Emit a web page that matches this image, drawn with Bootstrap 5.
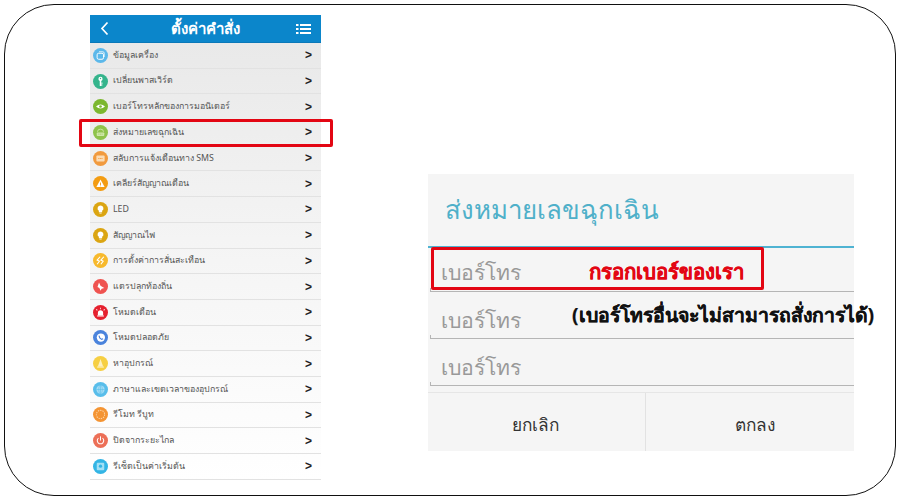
<!DOCTYPE html>
<html lang="th">

<head>
  <meta charset="UTF-8">
  <meta name="viewport" content="width=device-width, initial-scale=1.0">
  <title>ตั้งค่าคำสั่ง</title>
  <link href="https://cdn.jsdelivr.net/npm/bootstrap@5.3.0/dist/css/bootstrap.min.css" rel="stylesheet">
  <style>
    html, body { background: #fff; }
    body { margin: 0; width: 900px; height: 500px; overflow: hidden; font-family: "Noto Sans", "Liberation Sans", sans-serif; }
    .slide-frame { position: relative; width: 892px; height: 492px; margin: 4px 0 0 4px; border: 1px solid #111; border-radius: 50px; }
    .slide-body { padding: 10px 0 0 85px; gap: 107px; }

    .phone-panel { width: 231px; flex: none; }
    .phone-head { height: 28px; background: #0b86cb; color: #fff; border-bottom: 1px solid #0a78b8; padding: 0 10px; }
    .phone-head h1 { font-size: 15px; font-weight: 700; line-height: 1; margin: 0; letter-spacing: .1px; }
    .phone-list { background: linear-gradient(#e9e9e9, #f4f4f4 45%, #fff 100%); }
    .phone-row { height: 25.7px; padding: 0 9px 0 3px; border-bottom: 1px solid #e2e2e2; font-size: 8.8px; color: #555; }
    .phone-row svg { flex: none; margin-right: 5px; }
    .phone-row b { margin-left: auto; font-family: "Liberation Sans", sans-serif; font-size: 12px; color: #222; line-height: 1; }

    .alert-box { width: 426px; height: 277px; margin-top: 159px; background: #f5f5f5; flex: none; }
    .alert-title { height: 74px; padding: 0 17px 2px; border-bottom: 2px solid #4fb3d2; font-size: 25.8px; color: #4fb0c9; }
    .alert-field { position: relative; height: 47px; margin-left: 2px; padding: 14px 8px 0 11px; border-bottom: 1px solid #b5b5b5; font-size: 21.2px; color: #999; line-height: 1.3; }
    .alert-field::before { content: ""; position: absolute; left: 0; bottom: 0; height: 3px; border-left: 1px solid #b5b5b5; }
    .alert-field-top { height: 44px; padding-top: 10px; }
    .alert-foot { height: 59px; margin-top: 6px; border-top: 1px solid #e6e6e6; font-size: 17.3px; color: #333; }
    .alert-foot div { flex: 1; padding-top: 6px; }
    .alert-foot div:first-child { flex: none; width: 217px; padding-right: 3px; }
    .alert-foot div + div { border-left: 1px solid #e2e2e2; padding-left: 10px; }

    .mark-box { position: absolute; border: 3px solid #e30613; border-radius: 2px; }
    .mark-row { left: 74px; top: 114px; width: 254px; height: 28px; }
    .mark-field { left: 426px; top: 242px; width: 333px; height: 43px; }
    .note-red { position: absolute; left: 584px; top: 253px; font-size: 20.4px; font-weight: 700; color: #e30613; line-height: 1.3; white-space: nowrap; -webkit-text-stroke: .3px #e30613; }
    .note-black { position: absolute; left: 567px; top: 297px; font-size: 19.45px; font-weight: 700; color: #111; line-height: 1.3; white-space: nowrap; -webkit-text-stroke: .2px #111; }
  </style>
</head>

<body>

  <div class="slide-frame">
    <div class="slide-body d-flex align-items-start">

      <div class="phone-panel">
        <div class="phone-head d-flex align-items-center justify-content-between">
          <svg width="15" height="15" viewBox="0 0 15 15"><path d="M7.500 1.500 2 7.500l5.500 6" fill="none" stroke="#fff" stroke-width="1.700"/></svg>
          <h1>ตั้งค่าคำสั่ง</h1>
          <svg width="15" height="12" viewBox="0 0 15 12" fill="#fff"><path d="M0 1h2.500v2H0zM4 1h11v2H4zM0 5h2.500v2H0zM4 5h11v2H4zM0 9h2.500v2H0zM4 9h11v2H4z"/></svg>
        </div>
        <div class="phone-list" id="rowList"></div>
      </div>

      <div class="alert-box">
        <div class="alert-title d-flex align-items-center">ส่งหมายเลขฉุกเฉิน</div>
        <div class="alert-field alert-field-top">เบอร์โทร</div>
        <div class="alert-field">เบอร์โทร</div>
        <div class="alert-field">เบอร์โทร</div>
        <div class="alert-foot d-flex text-center">
          <div class="d-flex align-items-center justify-content-center">ยกเลิก</div>
          <div class="d-flex align-items-center justify-content-center">ตกลง</div>
        </div>
      </div>

    </div>

    <div class="mark-box mark-row"></div>
    <div class="mark-box mark-field"></div>
    <div class="note-red">กรอกเบอร์ของเรา</div>
    <div class="note-black">(เบอร์โทรอื่นจะไม่สามารถสั่งการได้)</div>
  </div>

  <script src="https://cdn.jsdelivr.net/npm/bootstrap@5.3.0/dist/js/bootstrap.bundle.min.js"></script>
  <script>
    const bulb = '<path d="M10 4.500a4 4 0 0 0-2.200 7.300V13.500h4.400v-1.700A4 4 0 0 0 10 4.500z" fill="#fff"/><path d="M8.500 14.300h3v1h-3z" fill="#fff"/>';
    const rows = [
      { text: "ข้อมูลเครื่อง", color: "#5cb8ea", glyph: '<rect x="5.500" y="7" width="8.500" height="8" rx="2" fill="none" stroke="#fff" stroke-width="1.300"/><path d="M8 5h5a2 2 0 0 1 2 2v5" fill="none" stroke="#fff"/>' },
      { text: "เปลี่ยนพาสเวิร์ด", color: "#35b48c", glyph: '<circle cx="10" cy="6.500" r="2.800" fill="#fff"/><path d="M9 8h2v8H9zM11 11.500h2v1.300h-2zM11 14h1.500v1.300H11z" fill="#fff"/><circle cx="10" cy="6" r=".9" fill="#35b48c"/>' },
      { text: "เบอร์โทรหลักของการมอนิเตอร์", color: "#7cb72f", glyph: '<path d="M4 10Q10 4.500 16 10 10 15.500 4 10z" fill="#fff"/><circle cx="10" cy="10" r="1.800" fill="#7cb72f"/>' },
      { text: "ส่งหมายเลขฉุกเฉิน", color: "#8fc34a", glyph: '<path d="M6 9a4 3.500 0 0 1 8 0" fill="none" stroke="#cfe6a8" stroke-width="1.200"/><rect x="5" y="10" width="10" height="4.500" rx="1" fill="#cfe6a8"/><path d="M7 12.200h6" stroke="#8fc34a" stroke-width=".8" stroke-dasharray="1.500 .7"/>' },
      { text: "สลับการแจ้งเตือนทาง SMS", color: "#f19a3e", glyph: '<rect x="4.500" y="6" width="11" height="8" rx="1.200" fill="#fbdcb5"/><path d="M7 10h6" stroke="#f19a3e" stroke-width="1.200" stroke-dasharray="1.500 .6"/>' },
      { text: "เคลียร์สัญญาณเตือน", color: "#f39c12", glyph: '<path d="M10 4.500l5.500 10H4.500z" fill="#fff"/><path d="M9.400 8.500h1.200v3.500H9.400zM9.400 12.700h1.200v1.100H9.400z" fill="#f39c12"/>' },
      { text: "LED", color: "#dba512", glyph: bulb },
      { text: "สัญญาณไฟ", color: "#dba512", glyph: bulb },
      { text: "การตั้งค่าการสั่นสะเทือน", color: "#f7b92c", glyph: '<path d="M9.500 5 5.500 9.500 8.500 11 5.500 15M14.500 5l-4 4.500 3 1.500-3 4" fill="none" stroke="#fff" stroke-width="1.500"/>' },
      { text: "แตรปลุกท้องถิ่น", color: "#ef5350", glyph: '<path d="M8 4.500l2 4.500 5 3-3.500 1-1.500 2.500-1.500-3.500-2.500-1.500z" fill="#fff"/>' },
      { text: "โหมดเตือน", color: "#e5202e", glyph: '<path d="M6.500 14v-3.500a3.500 3.500 0 0 1 7 0V14z" fill="#fff"/><path d="M5.500 14h9v1.200h-9zM9.500 3.500h1v2h-1zM4 6l1-.8 1.200 1.600-.9.700zM16 6l-1-.8-1.200 1.600.9.700z" fill="#fff"/>' },
      { text: "โหมดปลอดภัย", color: "#4a83dc", glyph: '<circle cx="10.500" cy="10" r="5.500" fill="#fff"/><path d="M8 7.500l1 3 2.500 2 2-.8" fill="none" stroke="#4a83dc" stroke-width="1.500"/>' },
      { text: "หาอุปกรณ์", color: "#f6cf43", glyph: '<path d="M10 4l3.500 10h-7z" fill="#fdf0c0"/><path d="M5.500 14h9v1.500h-9z" fill="#fdf0c0"/>' },
      { text: "ภาษาและเขตเวลาของอุปกรณ์", color: "#58bdea", glyph: '<circle cx="10" cy="10" r="5.500" fill="#a5dcf5"/><path d="M4.500 10h11M10 4.500v11" stroke="#58bdea" stroke-width=".8"/><ellipse cx="10" cy="10" rx="2.500" ry="5.500" fill="none" stroke="#58bdea" stroke-width=".7"/>' },
      { text: "รีโมท รีบูท", color: "#f49433", glyph: '<circle cx="10" cy="10" r="5.500" fill="none" stroke="#fcd3a3" stroke-width="1.400" stroke-dasharray="1.800 1.300"/>' },
      { text: "ปิดจากระยะไกล", color: "#ec6f57", glyph: '<path d="M7.300 6.800a4.300 4.300 0 1 0 5.400 0" fill="none" stroke="#fff" stroke-width="1.400"/><path d="M10 4.500v5.500" stroke="#fff" stroke-width="1.400"/>' },
      { text: "รีเซ็ตเป็นค่าเริ่มต้น", color: "#33b5e5", glyph: '<rect x="5" y="5" width="10" height="10" rx="1.200" fill="#a3e0f5"/><circle cx="10" cy="9.500" r="2.200" fill="#33b5e5"/>' },
    ];

    const rowList = document.getElementById("rowList");
    rows.forEach((row) => {
      rowList.innerHTML += `
        <div class="phone-row d-flex align-items-center">
          <svg width="15" height="15" viewBox="0 0 20 20"><circle cx="10" cy="10" r="10" fill="${row.color}"/>${row.glyph}</svg>
          <span>${row.text}</span>
          <b>&gt;</b>
        </div>`;
    });
  </script>
</body>

</html>
